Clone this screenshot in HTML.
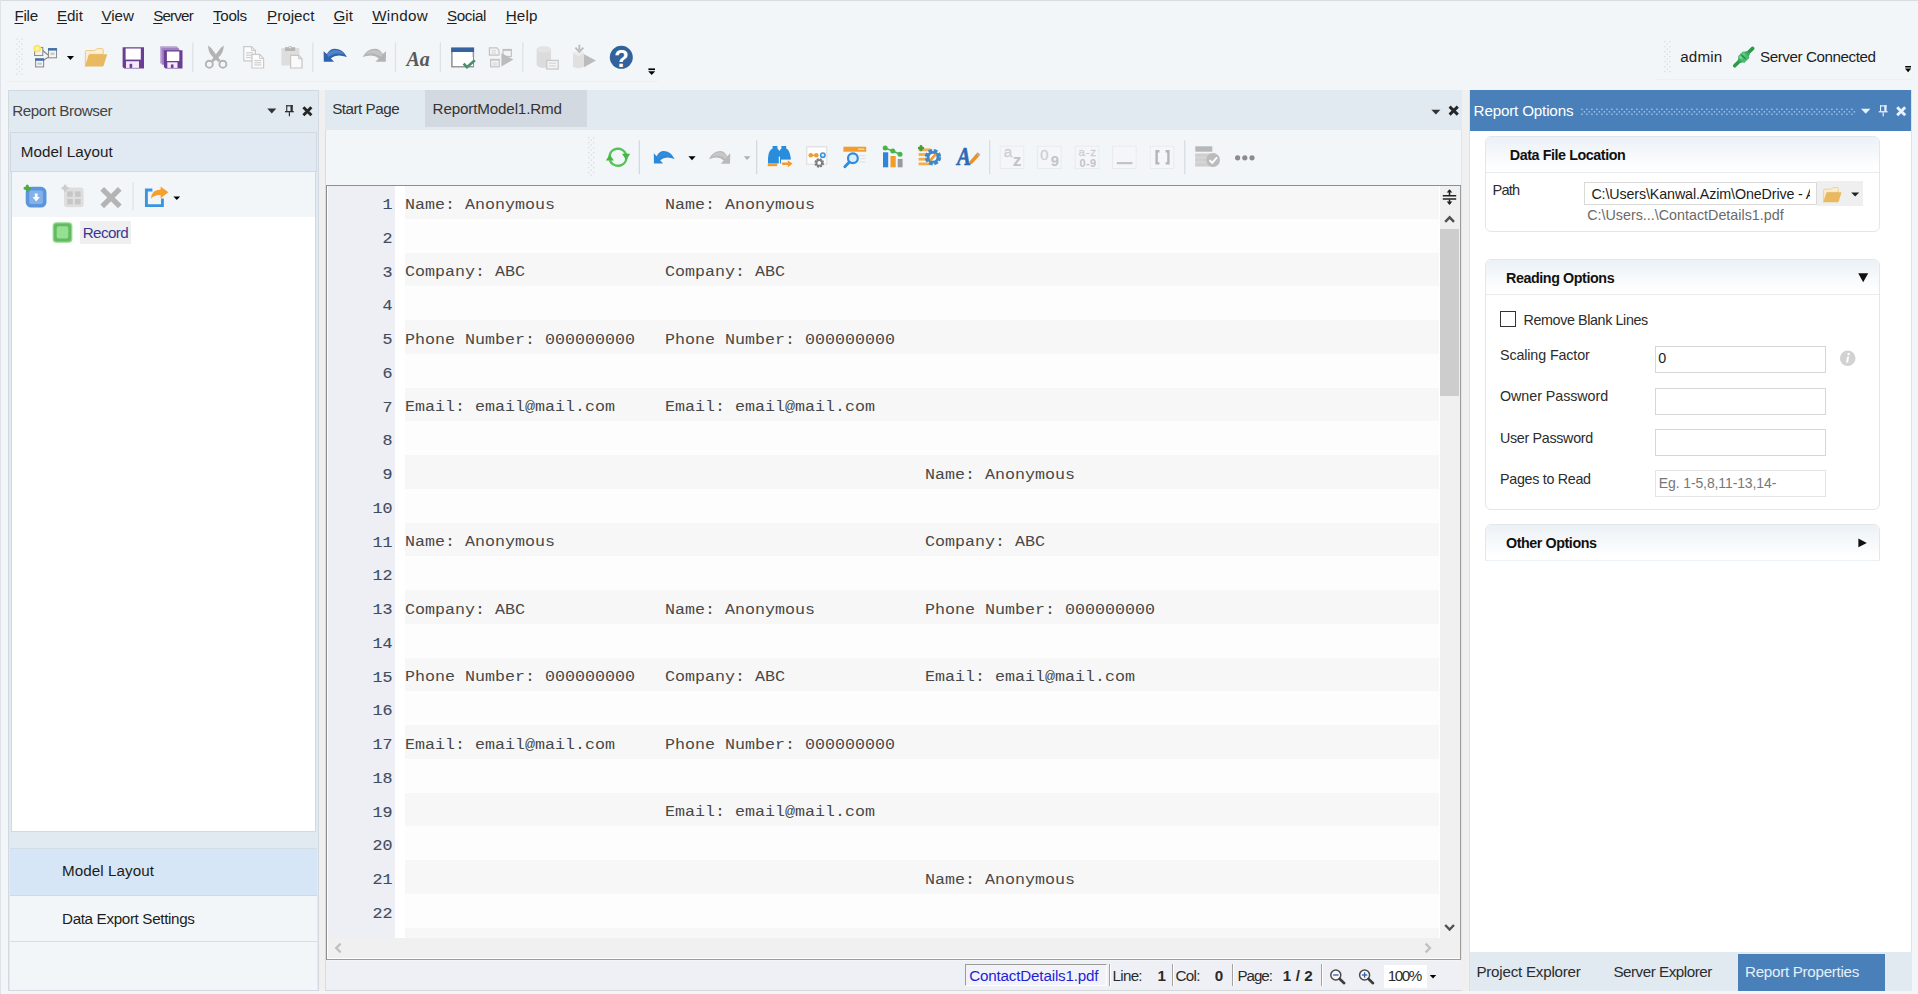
<!DOCTYPE html>
<html><head><meta charset="utf-8"><title>Report Model</title>
<style>
html,body{margin:0;padding:0;}
body{width:1918px;height:994px;overflow:hidden;position:relative;background:#f3f6f9;font-family:"Liberation Sans",sans-serif;}
.b{position:absolute;box-sizing:border-box;display:block;}
.t{position:absolute;z-index:3;white-space:pre;line-height:20px;font-family:"Liberation Sans",sans-serif;}
u{text-decoration:underline;text-underline-offset:2px;text-decoration-thickness:1px;}
</style></head><body>
<div class="b " style="left:0.00px;top:0.00px;width:1918.00px;height:994.00px;background:#f3f6f9;"></div>
<div class="b " style="left:0.00px;top:0.00px;width:1918.00px;height:1.00px;background:#d9dde2;"></div>
<div class="b " style="left:0.00px;top:0.00px;width:1.00px;height:994.00px;background:#dfe3e8;"></div>
<span class="t" style="left:14.50px;top:5.58px;font-size:15.20px;color:#1e1e1e;letter-spacing:-0.297px;"><u>F</u>ile</span>
<span class="t" style="left:56.90px;top:5.58px;font-size:15.20px;color:#1e1e1e;letter-spacing:-0.064px;"><u>E</u>dit</span>
<span class="t" style="left:101.40px;top:5.58px;font-size:15.20px;color:#1e1e1e;letter-spacing:-0.024px;"><u>V</u>iew</span>
<span class="t" style="left:153.20px;top:5.58px;font-size:15.20px;color:#1e1e1e;letter-spacing:-0.834px;"><u>S</u>erver</span>
<span class="t" style="left:213.10px;top:5.58px;font-size:15.20px;color:#1e1e1e;letter-spacing:-0.371px;"><u>T</u>ools</span>
<span class="t" style="left:267.00px;top:5.58px;font-size:15.20px;color:#1e1e1e;letter-spacing:0.015px;"><u>P</u>roject</span>
<span class="t" style="left:333.50px;top:5.58px;font-size:15.20px;color:#1e1e1e;letter-spacing:0.039px;"><u>G</u>it</span>
<span class="t" style="left:372.20px;top:5.58px;font-size:15.20px;color:#1e1e1e;letter-spacing:0.308px;"><u>W</u>indow</span>
<span class="t" style="left:447.00px;top:5.58px;font-size:15.20px;color:#1e1e1e;letter-spacing:-0.400px;"><u>S</u>ocial</span>
<span class="t" style="left:505.70px;top:5.58px;font-size:15.20px;color:#1e1e1e;letter-spacing:0.146px;"><u>H</u>elp</span>
<div class="b " style="left:6.00px;top:80.50px;width:652.00px;height:1.00px;background:#eceff3;"></div>
<span class="t" style="left:406.40px;top:49.00px;font-size:20.00px;color:#585858;font-family:'Liberation Serif', serif;font-weight:bold;font-style:italic;letter-spacing:0.060px;">Aa</span>
<span class="t" style="left:614.20px;top:48.60px;font-size:23.80px;color:#fff;font-weight:bold;">?</span>
<div class="b " style="left:1655.00px;top:79.00px;width:258.00px;height:1.00px;background:#eceff3;"></div>
<span class="t" style="left:1680.20px;top:46.58px;font-size:15.20px;color:#1e1e1e;letter-spacing:0.150px;">admin</span>
<span class="t" style="left:1760.00px;top:46.58px;font-size:15.20px;color:#1e1e1e;letter-spacing:-0.434px;">Server Connected</span>
<div class="b " style="left:8.00px;top:90.00px;width:311.00px;height:900.60px;background:#e1e9f1;border:1.5px solid #d3d9e0;"></div>
<span class="t" style="left:12.20px;top:100.68px;font-size:15.20px;color:#444;letter-spacing:-0.392px;">Report Browser</span>
<div class="b " style="left:9.50px;top:132.40px;width:307.50px;height:39.60px;background:#e1e9f2;border:1px solid #d3d9e0;"></div>
<span class="t" style="left:20.80px;top:142.13px;font-size:15.20px;color:#1c1c1c;letter-spacing:0.067px;">Model Layout</span>
<div class="b " style="left:10.50px;top:172.00px;width:305.50px;height:45.20px;background:#f3f6f9;"></div>
<div class="b " style="left:10.50px;top:217.20px;width:305.50px;height:615.30px;background:#fff;border-bottom:1px solid #d3d9e0;border-left:1px solid #d3d9e0;border-right:1px solid #d3d9e0;"></div>
<div class="b " style="left:10.50px;top:172.00px;width:1.00px;height:45.20px;background:#d3d9e0;"></div>
<div class="b " style="left:315.00px;top:172.00px;width:1.00px;height:45.20px;background:#d3d9e0;"></div>
<div class="b " style="left:80.00px;top:221.20px;width:51.00px;height:22.40px;background:#efefef;"></div>
<span class="t" style="left:82.70px;top:222.68px;font-size:15.20px;color:#3b3894;letter-spacing:-0.600px;">Record</span>
<div class="b " style="left:9.50px;top:847.50px;width:307.00px;height:47.50px;background:#d6e6f6;border-top:1px solid #d3dde7;"></div>
<div class="b " style="left:9.50px;top:895.00px;width:307.00px;height:47.00px;background:#f3f6f9;border-top:1px solid #d0d9e2;border-bottom:1px solid #d6dde5;"></div>
<div class="b " style="left:9.50px;top:942.00px;width:307.00px;height:47.50px;background:#f3f6f9;"></div>
<span class="t" style="left:62.00px;top:861.38px;font-size:15.20px;color:#1c1c1c;letter-spacing:0.067px;">Model Layout</span>
<span class="t" style="left:62.00px;top:908.88px;font-size:15.20px;color:#1c1c1c;letter-spacing:-0.337px;">Data Export Settings</span>
<div class="b " style="left:319.00px;top:90.00px;width:6.00px;height:901.00px;background:#f0f0f0;"></div>
<div class="b " style="left:1462.00px;top:90.00px;width:8.00px;height:901.00px;background:#f0f0f0;"></div>
<div class="b " style="left:325.00px;top:90.00px;width:1137.00px;height:39.50px;background:#e1e9f1;"></div>
<div class="b " style="left:425.00px;top:90.00px;width:162.30px;height:37.00px;background:#d3d9e0;"></div>
<span class="t" style="left:332.20px;top:99.48px;font-size:15.20px;color:#333;letter-spacing:-0.480px;">Start Page</span>
<span class="t" style="left:432.60px;top:99.48px;font-size:15.20px;color:#333;letter-spacing:-0.153px;">ReportModel1.Rmd</span>
<div class="b " style="left:325.00px;top:129.50px;width:1137.00px;height:861.00px;background:#f3f6f9;border-left:1px solid #d9dcdf;border-bottom:1px solid #d4d8dc;border-right:1px solid #e2e5e8;"></div>
<div class="b " style="left:326.30px;top:184.90px;width:1135.00px;height:775.00px;background:#fff;border:1.6px solid #8e8e8e;border-right-color:#9c9c9c;border-bottom-color:#9c9c9c;"></div>
<div class="b " style="left:327.80px;top:186.40px;width:67.20px;height:751.60px;background:#eeeff4;"></div>
<div class="b " style="left:405.00px;top:186.00px;width:1033.80px;height:32.75px;background:#f7f7f7;"></div>
<span class="t" style="left:382.60px;top:195.10px;font-size:16.67px;color:#3f4c5e;font-family:'Liberation Mono', monospace;transform:scaleY(0.86);transform-origin:0 14.4px;-webkit-text-stroke:0.15px #3f4c5e;">1</span>
<span class="t" style="left:405.00px;top:194.90px;font-size:16.67px;color:#484848;font-family:'Liberation Mono', monospace;transform:scaleY(0.88);transform-origin:0 14.4px;">Name: Anonymous</span>
<span class="t" style="left:665.00px;top:194.90px;font-size:16.67px;color:#484848;font-family:'Liberation Mono', monospace;transform:scaleY(0.88);transform-origin:0 14.4px;">Name: Anonymous</span>
<div class="b " style="left:405.00px;top:218.75px;width:1033.80px;height:33.75px;background:#fdfdfd;"></div>
<span class="t" style="left:382.60px;top:228.85px;font-size:16.67px;color:#3f4c5e;font-family:'Liberation Mono', monospace;transform:scaleY(0.86);transform-origin:0 14.4px;-webkit-text-stroke:0.15px #3f4c5e;">2</span>
<div class="b " style="left:405.00px;top:252.50px;width:1033.80px;height:33.75px;background:#f7f7f7;"></div>
<span class="t" style="left:382.60px;top:262.60px;font-size:16.67px;color:#3f4c5e;font-family:'Liberation Mono', monospace;transform:scaleY(0.86);transform-origin:0 14.4px;-webkit-text-stroke:0.15px #3f4c5e;">3</span>
<span class="t" style="left:405.00px;top:262.40px;font-size:16.67px;color:#484848;font-family:'Liberation Mono', monospace;transform:scaleY(0.88);transform-origin:0 14.4px;">Company: ABC</span>
<span class="t" style="left:665.00px;top:262.40px;font-size:16.67px;color:#484848;font-family:'Liberation Mono', monospace;transform:scaleY(0.88);transform-origin:0 14.4px;">Company: ABC</span>
<div class="b " style="left:405.00px;top:286.25px;width:1033.80px;height:33.75px;background:#fdfdfd;"></div>
<span class="t" style="left:382.60px;top:296.35px;font-size:16.67px;color:#3f4c5e;font-family:'Liberation Mono', monospace;transform:scaleY(0.86);transform-origin:0 14.4px;-webkit-text-stroke:0.15px #3f4c5e;">4</span>
<div class="b " style="left:405.00px;top:320.00px;width:1033.80px;height:33.75px;background:#f7f7f7;"></div>
<span class="t" style="left:382.60px;top:330.10px;font-size:16.67px;color:#3f4c5e;font-family:'Liberation Mono', monospace;transform:scaleY(0.86);transform-origin:0 14.4px;-webkit-text-stroke:0.15px #3f4c5e;">5</span>
<span class="t" style="left:405.00px;top:329.90px;font-size:16.67px;color:#484848;font-family:'Liberation Mono', monospace;transform:scaleY(0.88);transform-origin:0 14.4px;">Phone Number: 000000000</span>
<span class="t" style="left:665.00px;top:329.90px;font-size:16.67px;color:#484848;font-family:'Liberation Mono', monospace;transform:scaleY(0.88);transform-origin:0 14.4px;">Phone Number: 000000000</span>
<div class="b " style="left:405.00px;top:353.75px;width:1033.80px;height:33.75px;background:#fdfdfd;"></div>
<span class="t" style="left:382.60px;top:363.85px;font-size:16.67px;color:#3f4c5e;font-family:'Liberation Mono', monospace;transform:scaleY(0.86);transform-origin:0 14.4px;-webkit-text-stroke:0.15px #3f4c5e;">6</span>
<div class="b " style="left:405.00px;top:387.50px;width:1033.80px;height:33.75px;background:#f7f7f7;"></div>
<span class="t" style="left:382.60px;top:397.60px;font-size:16.67px;color:#3f4c5e;font-family:'Liberation Mono', monospace;transform:scaleY(0.86);transform-origin:0 14.4px;-webkit-text-stroke:0.15px #3f4c5e;">7</span>
<span class="t" style="left:405.00px;top:397.40px;font-size:16.67px;color:#484848;font-family:'Liberation Mono', monospace;transform:scaleY(0.88);transform-origin:0 14.4px;">Email: email@mail.com</span>
<span class="t" style="left:665.00px;top:397.40px;font-size:16.67px;color:#484848;font-family:'Liberation Mono', monospace;transform:scaleY(0.88);transform-origin:0 14.4px;">Email: email@mail.com</span>
<div class="b " style="left:405.00px;top:421.25px;width:1033.80px;height:33.75px;background:#fdfdfd;"></div>
<span class="t" style="left:382.60px;top:431.35px;font-size:16.67px;color:#3f4c5e;font-family:'Liberation Mono', monospace;transform:scaleY(0.86);transform-origin:0 14.4px;-webkit-text-stroke:0.15px #3f4c5e;">8</span>
<div class="b " style="left:405.00px;top:455.00px;width:1033.80px;height:33.75px;background:#f7f7f7;"></div>
<span class="t" style="left:382.60px;top:465.10px;font-size:16.67px;color:#3f4c5e;font-family:'Liberation Mono', monospace;transform:scaleY(0.86);transform-origin:0 14.4px;-webkit-text-stroke:0.15px #3f4c5e;">9</span>
<span class="t" style="left:925.00px;top:464.90px;font-size:16.67px;color:#484848;font-family:'Liberation Mono', monospace;transform:scaleY(0.88);transform-origin:0 14.4px;">Name: Anonymous</span>
<div class="b " style="left:405.00px;top:488.75px;width:1033.80px;height:33.75px;background:#fdfdfd;"></div>
<span class="t" style="left:372.60px;top:498.85px;font-size:16.67px;color:#3f4c5e;font-family:'Liberation Mono', monospace;transform:scaleY(0.86);transform-origin:0 14.4px;-webkit-text-stroke:0.15px #3f4c5e;">10</span>
<div class="b " style="left:405.00px;top:522.50px;width:1033.80px;height:33.75px;background:#f7f7f7;"></div>
<span class="t" style="left:372.60px;top:532.60px;font-size:16.67px;color:#3f4c5e;font-family:'Liberation Mono', monospace;transform:scaleY(0.86);transform-origin:0 14.4px;-webkit-text-stroke:0.15px #3f4c5e;">11</span>
<span class="t" style="left:405.00px;top:532.40px;font-size:16.67px;color:#484848;font-family:'Liberation Mono', monospace;transform:scaleY(0.88);transform-origin:0 14.4px;">Name: Anonymous</span>
<span class="t" style="left:925.00px;top:532.40px;font-size:16.67px;color:#484848;font-family:'Liberation Mono', monospace;transform:scaleY(0.88);transform-origin:0 14.4px;">Company: ABC</span>
<div class="b " style="left:405.00px;top:556.25px;width:1033.80px;height:33.75px;background:#fdfdfd;"></div>
<span class="t" style="left:372.60px;top:566.35px;font-size:16.67px;color:#3f4c5e;font-family:'Liberation Mono', monospace;transform:scaleY(0.86);transform-origin:0 14.4px;-webkit-text-stroke:0.15px #3f4c5e;">12</span>
<div class="b " style="left:405.00px;top:590.00px;width:1033.80px;height:33.75px;background:#f7f7f7;"></div>
<span class="t" style="left:372.60px;top:600.10px;font-size:16.67px;color:#3f4c5e;font-family:'Liberation Mono', monospace;transform:scaleY(0.86);transform-origin:0 14.4px;-webkit-text-stroke:0.15px #3f4c5e;">13</span>
<span class="t" style="left:405.00px;top:599.90px;font-size:16.67px;color:#484848;font-family:'Liberation Mono', monospace;transform:scaleY(0.88);transform-origin:0 14.4px;">Company: ABC</span>
<span class="t" style="left:665.00px;top:599.90px;font-size:16.67px;color:#484848;font-family:'Liberation Mono', monospace;transform:scaleY(0.88);transform-origin:0 14.4px;">Name: Anonymous</span>
<span class="t" style="left:925.00px;top:599.90px;font-size:16.67px;color:#484848;font-family:'Liberation Mono', monospace;transform:scaleY(0.88);transform-origin:0 14.4px;">Phone Number: 000000000</span>
<div class="b " style="left:405.00px;top:623.75px;width:1033.80px;height:33.75px;background:#fdfdfd;"></div>
<span class="t" style="left:372.60px;top:633.85px;font-size:16.67px;color:#3f4c5e;font-family:'Liberation Mono', monospace;transform:scaleY(0.86);transform-origin:0 14.4px;-webkit-text-stroke:0.15px #3f4c5e;">14</span>
<div class="b " style="left:405.00px;top:657.50px;width:1033.80px;height:33.75px;background:#f7f7f7;"></div>
<span class="t" style="left:372.60px;top:667.60px;font-size:16.67px;color:#3f4c5e;font-family:'Liberation Mono', monospace;transform:scaleY(0.86);transform-origin:0 14.4px;-webkit-text-stroke:0.15px #3f4c5e;">15</span>
<span class="t" style="left:405.00px;top:667.40px;font-size:16.67px;color:#484848;font-family:'Liberation Mono', monospace;transform:scaleY(0.88);transform-origin:0 14.4px;">Phone Number: 000000000</span>
<span class="t" style="left:665.00px;top:667.40px;font-size:16.67px;color:#484848;font-family:'Liberation Mono', monospace;transform:scaleY(0.88);transform-origin:0 14.4px;">Company: ABC</span>
<span class="t" style="left:925.00px;top:667.40px;font-size:16.67px;color:#484848;font-family:'Liberation Mono', monospace;transform:scaleY(0.88);transform-origin:0 14.4px;">Email: email@mail.com</span>
<div class="b " style="left:405.00px;top:691.25px;width:1033.80px;height:33.75px;background:#fdfdfd;"></div>
<span class="t" style="left:372.60px;top:701.35px;font-size:16.67px;color:#3f4c5e;font-family:'Liberation Mono', monospace;transform:scaleY(0.86);transform-origin:0 14.4px;-webkit-text-stroke:0.15px #3f4c5e;">16</span>
<div class="b " style="left:405.00px;top:725.00px;width:1033.80px;height:33.75px;background:#f7f7f7;"></div>
<span class="t" style="left:372.60px;top:735.10px;font-size:16.67px;color:#3f4c5e;font-family:'Liberation Mono', monospace;transform:scaleY(0.86);transform-origin:0 14.4px;-webkit-text-stroke:0.15px #3f4c5e;">17</span>
<span class="t" style="left:405.00px;top:734.90px;font-size:16.67px;color:#484848;font-family:'Liberation Mono', monospace;transform:scaleY(0.88);transform-origin:0 14.4px;">Email: email@mail.com</span>
<span class="t" style="left:665.00px;top:734.90px;font-size:16.67px;color:#484848;font-family:'Liberation Mono', monospace;transform:scaleY(0.88);transform-origin:0 14.4px;">Phone Number: 000000000</span>
<div class="b " style="left:405.00px;top:758.75px;width:1033.80px;height:33.75px;background:#fdfdfd;"></div>
<span class="t" style="left:372.60px;top:768.85px;font-size:16.67px;color:#3f4c5e;font-family:'Liberation Mono', monospace;transform:scaleY(0.86);transform-origin:0 14.4px;-webkit-text-stroke:0.15px #3f4c5e;">18</span>
<div class="b " style="left:405.00px;top:792.50px;width:1033.80px;height:33.75px;background:#f7f7f7;"></div>
<span class="t" style="left:372.60px;top:802.60px;font-size:16.67px;color:#3f4c5e;font-family:'Liberation Mono', monospace;transform:scaleY(0.86);transform-origin:0 14.4px;-webkit-text-stroke:0.15px #3f4c5e;">19</span>
<span class="t" style="left:665.00px;top:802.40px;font-size:16.67px;color:#484848;font-family:'Liberation Mono', monospace;transform:scaleY(0.88);transform-origin:0 14.4px;">Email: email@mail.com</span>
<div class="b " style="left:405.00px;top:826.25px;width:1033.80px;height:33.75px;background:#fdfdfd;"></div>
<span class="t" style="left:372.60px;top:836.35px;font-size:16.67px;color:#3f4c5e;font-family:'Liberation Mono', monospace;transform:scaleY(0.86);transform-origin:0 14.4px;-webkit-text-stroke:0.15px #3f4c5e;">20</span>
<div class="b " style="left:405.00px;top:860.00px;width:1033.80px;height:33.75px;background:#f7f7f7;"></div>
<span class="t" style="left:372.60px;top:870.10px;font-size:16.67px;color:#3f4c5e;font-family:'Liberation Mono', monospace;transform:scaleY(0.86);transform-origin:0 14.4px;-webkit-text-stroke:0.15px #3f4c5e;">21</span>
<span class="t" style="left:925.00px;top:869.90px;font-size:16.67px;color:#484848;font-family:'Liberation Mono', monospace;transform:scaleY(0.88);transform-origin:0 14.4px;">Name: Anonymous</span>
<div class="b " style="left:405.00px;top:893.75px;width:1033.80px;height:33.75px;background:#fdfdfd;"></div>
<span class="t" style="left:372.60px;top:903.85px;font-size:16.67px;color:#3f4c5e;font-family:'Liberation Mono', monospace;transform:scaleY(0.86);transform-origin:0 14.4px;-webkit-text-stroke:0.15px #3f4c5e;">22</span>
<div class="b " style="left:405.00px;top:927.50px;width:1033.80px;height:10.50px;background:#f7f7f7;"></div>
<div class="b " style="left:1440.00px;top:186.00px;width:19.80px;height:752.00px;background:#f0f0f0;"></div>
<div class="b " style="left:1440.30px;top:228.80px;width:18.50px;height:167.00px;background:#cdcdcd;"></div>
<div class="b " style="left:328.00px;top:938.00px;width:1131.80px;height:20.40px;background:#f0f0f0;"></div>
<div class="b " style="left:326.00px;top:961.00px;width:1135.50px;height:29.00px;background:#eef0f5;"></div>
<div class="b " style="left:965.00px;top:964.00px;width:141.50px;height:21.50px;background:#f1f3f8;border-left:1px solid #9c9c9c;border-top:1px solid #9c9c9c;border-right:1px solid #fff;border-bottom:1px solid #fff;"></div>
<span class="t" style="left:969.20px;top:965.98px;font-size:15.20px;color:#1f1fd6;letter-spacing:-0.175px;">ContactDetails1.pdf</span>
<div class="b " style="left:1108.60px;top:964.00px;width:1.00px;height:22.00px;background:#a3a3a3;"></div>
<div class="b " style="left:1109.60px;top:964.00px;width:1.00px;height:22.00px;background:#fff;"></div>
<div class="b " style="left:1171.50px;top:964.00px;width:1.00px;height:22.00px;background:#a3a3a3;"></div>
<div class="b " style="left:1172.50px;top:964.00px;width:1.00px;height:22.00px;background:#fff;"></div>
<div class="b " style="left:1231.80px;top:964.00px;width:1.00px;height:22.00px;background:#a3a3a3;"></div>
<div class="b " style="left:1232.80px;top:964.00px;width:1.00px;height:22.00px;background:#fff;"></div>
<div class="b " style="left:1321.40px;top:964.00px;width:1.00px;height:22.00px;background:#a3a3a3;"></div>
<div class="b " style="left:1322.40px;top:964.00px;width:1.00px;height:22.00px;background:#fff;"></div>
<span class="t" style="left:1112.60px;top:965.98px;font-size:15.20px;color:#2a2a2a;letter-spacing:-0.740px;">Line:</span>
<span class="t" style="left:1157.40px;top:965.98px;font-size:15.20px;color:#2a2a2a;font-weight:bold;">1</span>
<span class="t" style="left:1175.40px;top:965.98px;font-size:15.20px;color:#2a2a2a;letter-spacing:-0.677px;">Col:</span>
<span class="t" style="left:1214.80px;top:965.98px;font-size:15.20px;color:#2a2a2a;font-weight:bold;">0</span>
<span class="t" style="left:1237.40px;top:965.98px;font-size:15.20px;color:#2a2a2a;letter-spacing:-1.031px;">Page:</span>
<span class="t" style="left:1282.80px;top:965.98px;font-size:15.20px;color:#2a2a2a;font-weight:bold;letter-spacing:0.106px;">1 / 2</span>
<div class="b " style="left:1384.30px;top:965.00px;width:42.40px;height:22.60px;background:#fff;"></div>
<span class="t" style="left:1387.80px;top:965.98px;font-size:15.20px;color:#2a2a2a;letter-spacing:-1.492px;">100%</span>
<span class="t" style="left:957.20px;top:146.38px;font-size:25.40px;color:#2f68b4;font-family:'Liberation Serif', serif;font-weight:bold;font-style:italic;transform:scaleX(0.82);transform-origin:0 0;-webkit-text-stroke:0.6px #2f68b4;">A</span>
<span class="t" style="left:1003.80px;top:141.58px;font-size:15.20px;color:#cccfd2;-webkit-text-stroke:0.35px #cccfd2;">a</span>
<span class="t" style="left:1012.80px;top:149.82px;font-size:17.40px;color:#c1c3c6;font-weight:bold;">z</span>
<span class="t" style="left:1040.20px;top:145.09px;font-size:14.60px;color:#cccfd2;-webkit-text-stroke:0.35px #cccfd2;">0</span>
<span class="t" style="left:1050.80px;top:150.72px;font-size:14.80px;color:#c1c3c6;font-weight:bold;">9</span>
<span class="t" style="left:1078.60px;top:141.53px;font-size:11.60px;color:#cccfd2;letter-spacing:0.643px;-webkit-text-stroke:0.3px #cccfd2;">a-z</span>
<span class="t" style="left:1079.60px;top:152.67px;font-size:10.90px;color:#c1c3c6;font-weight:bold;letter-spacing:0.323px;">0-9</span>
<div class="b " style="left:1469.20px;top:90.40px;width:442.60px;height:900.60px;background:#fff;border-right:1px solid #dfe3e8;border-left:1px solid #dde1e6;"></div>
<div class="b " style="left:1469.50px;top:90.40px;width:441.40px;height:41.10px;background:#4a80b9;"></div>
<span class="t" style="left:1473.60px;top:100.88px;font-size:15.20px;color:#fff;letter-spacing:-0.171px;">Report Options</span>
<div class="b " style="left:1484.80px;top:136.00px;width:395.20px;height:96.00px;background:#fff;border:1px solid #e3e7ec;border-radius:6px;"></div>
<div class="b " style="left:1485.80px;top:137.00px;width:393.20px;height:35.80px;background:linear-gradient(#ecf1f6,#ffffff 92%);border-bottom:1px solid #e9ecef;border-radius:5px 5px 0 0;"></div>
<span class="t" style="left:1509.80px;top:144.90px;font-size:14.30px;color:#111;font-weight:bold;letter-spacing:-0.421px;">Data File Location</span>
<span class="t" style="left:1492.60px;top:180.19px;font-size:14.60px;color:#2c2c2c;letter-spacing:-0.811px;">Path</span>
<div class="b " style="left:1584.00px;top:181.70px;width:233.00px;height:23.50px;background:#fff;border:1px solid #d9d9d9;"></div>
<div class="b " style="left:1817.40px;top:181.20px;width:45.20px;height:24.60px;background:#efefef;"></div>
<div class="b " style="left:1585.00px;top:183.00px;width:225.00px;height:21.00px;overflow:hidden;"><span class="t" style="left:6.40px;top:1.00px;font-size:14.30px;color:#1c1c1c;letter-spacing:-0.127px;">C:\Users\Kanwal.Azim\OneDrive - A</span></div>
<span class="t" style="left:1587.20px;top:204.80px;font-size:14.30px;color:#6a6a6a;letter-spacing:0.007px;">C:\Users...\ContactDetails1.pdf</span>
<div class="b " style="left:1484.80px;top:258.80px;width:395.20px;height:251.00px;background:#fff;border:1px solid #e3e7ec;border-radius:6px;"></div>
<div class="b " style="left:1485.80px;top:259.80px;width:393.20px;height:35.30px;background:linear-gradient(#ecf1f6,#ffffff 92%);border-bottom:1px solid #e9ecef;border-radius:5px 5px 0 0;"></div>
<span class="t" style="left:1506.00px;top:267.70px;font-size:14.30px;color:#111;font-weight:bold;letter-spacing:-0.414px;">Reading Options</span>
<div class="b " style="left:1500.00px;top:311.40px;width:16.00px;height:16.00px;background:#fff;border:1.3px solid #333;"></div>
<span class="t" style="left:1523.60px;top:309.90px;font-size:14.30px;color:#2c2c2c;letter-spacing:-0.385px;">Remove Blank Lines</span>
<span class="t" style="left:1500.00px;top:344.70px;font-size:14.30px;color:#2c2c2c;letter-spacing:-0.123px;">Scaling Factor</span>
<div class="b " style="left:1655.20px;top:346.20px;width:171.00px;height:27.00px;background:#fff;border:1px solid #d6d6d6;"></div>
<span class="t" style="left:1500.00px;top:386.20px;font-size:14.30px;color:#2c2c2c;letter-spacing:-0.052px;">Owner Password</span>
<div class="b " style="left:1655.20px;top:387.70px;width:171.00px;height:27.00px;background:#fff;border:1px solid #d6d6d6;"></div>
<span class="t" style="left:1500.00px;top:427.70px;font-size:14.30px;color:#2c2c2c;letter-spacing:-0.313px;">User Password</span>
<div class="b " style="left:1655.20px;top:429.20px;width:171.00px;height:27.00px;background:#fff;border:1px solid #d6d6d6;"></div>
<span class="t" style="left:1500.00px;top:468.60px;font-size:14.30px;color:#2c2c2c;letter-spacing:-0.300px;">Pages to Read</span>
<div class="b " style="left:1655.20px;top:470.20px;width:171.00px;height:27.00px;background:#fff;border:1px solid #e4e4e4;"></div>
<span class="t" style="left:1658.20px;top:348.00px;font-size:14.30px;color:#1c1c1c;">0</span>
<span class="t" style="left:1658.80px;top:472.90px;font-size:14.00px;color:#777;letter-spacing:-0.116px;">Eg. 1-5,8,11-13,14-</span>
<div class="b " style="left:1484.80px;top:523.80px;width:395.20px;height:37.20px;background:#fff;border:1px solid #e3e7ec;border-radius:6px 6px 0 0;"></div>
<div class="b " style="left:1485.80px;top:524.80px;width:393.20px;height:36.20px;background:linear-gradient(#ecf1f6,#ffffff 92%);border-bottom:1px solid transparent;border-radius:5px 5px 0 0;"></div>
<span class="t" style="left:1506.00px;top:532.70px;font-size:14.30px;color:#111;font-weight:bold;letter-spacing:-0.427px;">Other Options</span>
<div class="b " style="left:1469.50px;top:951.50px;width:442.50px;height:39.50px;background:#e1e9f1;"></div>
<div class="b " style="left:1737.60px;top:954.30px;width:147.60px;height:37.00px;background:#4a80b9;"></div>
<span class="t" style="left:1476.40px;top:962.38px;font-size:15.20px;color:#2c2c2c;letter-spacing:-0.242px;">Project Explorer</span>
<span class="t" style="left:1613.40px;top:962.38px;font-size:15.20px;color:#2c2c2c;letter-spacing:-0.471px;">Server Explorer</span>
<span class="t" style="left:1745.00px;top:962.38px;font-size:15.20px;color:#e6eef7;letter-spacing:-0.295px;">Report Properties</span>
<svg class="b" style="left:0;top:0" width="1918" height="994" viewBox="0 0 1918 994"><g fill="#d5dce4"><rect x="16.3" y="38.5" width="1.3" height="1.3"/><rect x="21.3" y="38.5" width="1.3" height="1.3"/><rect x="18.8" y="41.0" width="1.3" height="1.3"/><rect x="16.3" y="43.5" width="1.3" height="1.3"/><rect x="21.3" y="43.5" width="1.3" height="1.3"/><rect x="18.8" y="46.0" width="1.3" height="1.3"/><rect x="16.3" y="48.5" width="1.3" height="1.3"/><rect x="21.3" y="48.5" width="1.3" height="1.3"/><rect x="18.8" y="51.0" width="1.3" height="1.3"/><rect x="16.3" y="53.5" width="1.3" height="1.3"/><rect x="21.3" y="53.5" width="1.3" height="1.3"/><rect x="18.8" y="56.0" width="1.3" height="1.3"/><rect x="16.3" y="58.5" width="1.3" height="1.3"/><rect x="21.3" y="58.5" width="1.3" height="1.3"/><rect x="18.8" y="61.0" width="1.3" height="1.3"/><rect x="16.3" y="63.5" width="1.3" height="1.3"/><rect x="21.3" y="63.5" width="1.3" height="1.3"/><rect x="18.8" y="66.0" width="1.3" height="1.3"/><rect x="16.3" y="68.5" width="1.3" height="1.3"/><rect x="21.3" y="68.5" width="1.3" height="1.3"/><rect x="18.8" y="71.0" width="1.3" height="1.3"/><rect x="16.3" y="73.5" width="1.3" height="1.3"/><rect x="21.3" y="73.5" width="1.3" height="1.3"/></g>
<g>
<path d="M41 49 L48 55 M44 60 L48.5 57" stroke="#8c8c8c" stroke-width="1.3" fill="none"/>
<rect x="34.6" y="47.5" width="8.2" height="8" fill="#f4f4f4" stroke="#8e8e8e" stroke-width="1.1"/>
<circle cx="37.2" cy="48.6" r="3.9" fill="#f7e66a"/><circle cx="37.2" cy="48.6" r="2" fill="#fdf3a0"/>
<rect x="48.5" y="48.6" width="8" height="9.2" fill="#f6f6f6" stroke="#8e8e8e" stroke-width="1.1"/>
<rect x="48" y="48.2" width="9" height="2.4" fill="#3f6fae"/>
<rect x="50.5" y="52.5" width="4" height="2.6" fill="#c9c9c9"/>
<rect x="35.6" y="58.9" width="8" height="8" fill="#f6f6f6" stroke="#8e8e8e" stroke-width="1.1"/>
<rect x="35.1" y="58.4" width="9" height="2.4" fill="#3f6fae"/>
<rect x="37.3" y="62.6" width="4.6" height="2.2" fill="#c9c9c9"/>
</g>
<path d="M66.90 56.00 L74.00 56.00 L70.45 60.00 Z" fill="#000"/>
<g transform="translate(84.60 48.40) scale(1.000)">
<path d="M0.8 18 L0.8 3.2 Q0.8 2.2 1.8 2.2 L10 2.2 L12 0.6 Q12.4 0.2 13 0.2 L17.6 0.2 Q18.6 0.2 18.6 1.2 L18.6 6 L4.8 6 Z" fill="#fbeed2" stroke="#ecc47a" stroke-width="0.9"/>
<path d="M0.6 18.2 L4.2 6.6 Q4.5 5.8 5.3 5.8 L21.8 5.8 Q22.7 5.8 22.4 6.7 L19 17.4 Q18.7 18.2 17.9 18.2 Z" fill="#e8b961"/>
</g>
<g>
<path d="M122.60 47.20 h21.40 v21.30 h-19.80 l-1.6 -1.6 Z" fill="#6a3e92"/>
<rect x="125.60" y="48.50" width="15.20" height="11.08" fill="#fff"/>
<rect x="126.00" y="61.26" width="13.00" height="6.64" fill="#f4e9fb"/>
<rect x="129.60" y="63.81" width="2.6" height="4.09" fill="#6a3e92"/>
</g>
<path d="M160.2 46.2 h16.5 l2.3 2.3 v15 h-18.8 Z" fill="#b9a0d4"/><path d="M161.8 48 h16 l1.5 1.5 v15.2 h-17.5 Z" fill="#9f80c0"/>
<g>
<path d="M163.90 50.20 h18.60 v18.30 h-17.00 l-1.6 -1.6 Z" fill="#6a3e92"/>
<rect x="166.90" y="51.50" width="12.40" height="9.52" fill="#fff"/>
<rect x="167.30" y="62.28" width="10.20" height="5.62" fill="#f4e9fb"/>
<rect x="170.90" y="64.47" width="2.6" height="3.43" fill="#6a3e92"/>
</g>
<rect x="192.20" y="42.30" width="1.3" height="29.70" fill="#dde2e8"/>
<rect x="312.20" y="42.30" width="1.3" height="29.70" fill="#dde2e8"/>
<rect x="394.80" y="42.30" width="1.3" height="29.70" fill="#dde2e8"/>
<rect x="439.70" y="42.30" width="1.3" height="29.70" fill="#dde2e8"/>
<rect x="522.20" y="42.30" width="1.3" height="29.70" fill="#dde2e8"/>
<g fill="#b3b3b3">
<path d="M208 45.4 Q211.4 47.4 213.4 51 L220.6 60.4 L218.2 62 L211.4 55.6 Q208.2 51.4 208 45.4 Z"/>
<path d="M223.8 45.4 Q220.4 47.4 218.4 51 L211.2 60.4 L213.6 62 L220.4 55.6 Q223.6 51.4 223.8 45.4 Z"/></g>
<g fill="none" stroke="#b3b3b3" stroke-width="1.9"><circle cx="209.3" cy="64.2" r="3.5"/><circle cx="222.9" cy="64.2" r="3.5"/></g>
<path d="M243.80 46.60 h7.60 l4.00 4.00 v10.20 h-11.60 Z" fill="#fdfdfd" stroke="#c9c9c9" stroke-width="1.2"/><path d="M251.40 46.60 v4.00 h4.00" fill="none" stroke="#c9c9c9" stroke-width="1"/><rect x="246.00" y="52.10" width="7.20" height="1.3" fill="#d2d2d2"/><rect x="246.00" y="54.50" width="7.20" height="1.3" fill="#d2d2d2"/><rect x="246.00" y="56.90" width="7.20" height="1.3" fill="#d2d2d2"/>
<path d="M252.00 54.40 h7.60 l4.00 4.00 v9.60 h-11.60 Z" fill="#fdfdfd" stroke="#c9c9c9" stroke-width="1.2"/><path d="M259.60 54.40 v4.00 h4.00" fill="none" stroke="#c9c9c9" stroke-width="1"/><rect x="254.20" y="59.90" width="7.20" height="1.3" fill="#d2d2d2"/><rect x="254.20" y="62.10" width="7.20" height="1.3" fill="#d2d2d2"/><rect x="254.20" y="64.30" width="7.20" height="1.3" fill="#d2d2d2"/>
<rect x="281.4" y="48" width="18" height="17.5" fill="#dddddd"/>
<rect x="285" y="47.2" width="10.2" height="3.8" fill="#b4b4b4"/><path d="M287.6 47.4 Q290.1 44.4 292.6 47.4 Z" fill="#b4b4b4"/><circle cx="290.1" cy="47.6" r="0.9" fill="#eee"/>
<path d="M290.60 55.40 h8.00 l3.40 3.40 v9.20 h-11.40 Z" fill="#fafafa" stroke="#c6c6c6" stroke-width="1.2"/><path d="M298.60 55.40 v3.40 h3.40" fill="none" stroke="#c6c6c6" stroke-width="1"/>
<g transform="translate(323.40 48.60) scale(1.000 0.986)"><path d="M0.2 2.6 L0.4 13.4 L10.6 13.4 L7.4 9.9 Q13.2 4.6 23.6 8.6 Q19.2 0.2 11.2 0.2 Q6.6 0.2 3.4 5.6 Z" fill="#2d62ae"/>
<path d="M3.4 5.6 Q7 1.6 11.6 1.5 Q17 1.4 21 6 Q14 3.6 8.6 6.4 Q5.8 7.8 4.8 8.6 Z" fill="#6f9fd8" opacity="0.55"/></g>
<g transform="translate(386.20 48.60) scale(-1.000 0.986)"><path d="M0.2 2.6 L0.4 13.4 L10.6 13.4 L7.4 9.9 Q13.2 4.6 23.6 8.6 Q19.2 0.2 11.2 0.2 Q6.6 0.2 3.4 5.6 Z" fill="#b3b3b3"/>
<path d="M3.4 5.6 Q7 1.6 11.6 1.5 Q17 1.4 21 6 Q14 3.6 8.6 6.4 Q5.8 7.8 4.8 8.6 Z" fill="#d2d2d2" opacity="0.55"/></g>
<rect x="451.9" y="48.5" width="21.4" height="18.2" fill="#fff" stroke="#8f8f8f" stroke-width="1.5"/>
<rect x="451.2" y="47.5" width="22.9" height="4.6" fill="#35639f"/>
<rect x="453" y="52.1" width="20" height="14" fill="#fff"/><rect x="472.6" y="52" width="1.5" height="5" fill="#9a9a9a"/>
<path d="M463.6 63.6 L467 67.2 L474.8 60.2" fill="none" stroke="#4b8e70" stroke-width="2.7"/>
<g fill="#f3f3f3" stroke="#c4c4c4" stroke-width="1.2">
<path d="M489.4 47.8 h7.4 l2.2 2.4 v5 h-9.6 Z"/><rect x="503" y="49.5" width="8.4" height="7"/><rect x="490.6" y="59.4" width="8.6" height="7.4"/></g>
<rect x="503" y="49" width="8.4" height="1.8" fill="#bdbdbd"/><rect x="490.6" y="59" width="8.6" height="1.6" fill="#c6c6c6"/>
<rect x="491.5" y="50.3" width="4.5" height="1" fill="#d4d4d4"/><rect x="491.5" y="52.6" width="4.5" height="1" fill="#d4d4d4"/><rect x="492.6" y="62.6" width="4.6" height="1" fill="#d4d4d4"/><rect x="492.6" y="64.4" width="4.6" height="1" fill="#d4d4d4"/>
<path d="M501.4 53 L513.4 59.6 L501.4 66.4 Z" fill="#bcbcbc"/>
<path d="M536.6 49.5 v15 a7.2 3.4 0 0 0 14.4 0 v-15 Z" fill="#dcdcdc"/><ellipse cx="543.8" cy="49.4" rx="7.2" ry="3.4" fill="#e3e3e3"/>
<rect x="546.8" y="60.4" width="11.4" height="8.6" fill="#f4f4f4" stroke="#c8c8c8" stroke-width="1.3"/>
<rect x="549" y="62.6" width="7" height="1.1" fill="#d2d2d2"/><rect x="549" y="65.4" width="7" height="1.1" fill="#d2d2d2"/>
<path d="M573 52.5 l5.5 3.6 l5.5 -3.6 v14.6 q-5.5 2.2 -11 0 Z" fill="#e0e0e0"/><path d="M573 52.5 l5.5 -1.2 l5.5 1.2 l-5.5 3.6Z" fill="#ececec"/>
<path d="M579.4 44.8 v5.2 M575.4 47.6 l4 4.2 l4 -4.2" fill="none" stroke="#bdbdbd" stroke-width="1.9"/>
<path d="M584 54.2 L596 60.6 L584 67.2 Z" fill="#bcbcbc"/>
<circle cx="621.3" cy="57.3" r="11.5" fill="#31629c"/>
<rect x="648.4" y="68.4" width="6.6" height="1.7" fill="#000"/><path d="M648.20 71.30 L655.20 71.30 L651.70 75.00 Z" fill="#000"/>
<g fill="#d5dce4"><rect x="1664.2" y="41.0" width="1.3" height="1.3"/><rect x="1669.2" y="41.0" width="1.3" height="1.3"/><rect x="1666.7" y="43.5" width="1.3" height="1.3"/><rect x="1664.2" y="46.0" width="1.3" height="1.3"/><rect x="1669.2" y="46.0" width="1.3" height="1.3"/><rect x="1666.7" y="48.5" width="1.3" height="1.3"/><rect x="1664.2" y="51.0" width="1.3" height="1.3"/><rect x="1669.2" y="51.0" width="1.3" height="1.3"/><rect x="1666.7" y="53.5" width="1.3" height="1.3"/><rect x="1664.2" y="56.0" width="1.3" height="1.3"/><rect x="1669.2" y="56.0" width="1.3" height="1.3"/><rect x="1666.7" y="58.5" width="1.3" height="1.3"/><rect x="1664.2" y="61.0" width="1.3" height="1.3"/><rect x="1669.2" y="61.0" width="1.3" height="1.3"/><rect x="1666.7" y="63.5" width="1.3" height="1.3"/><rect x="1664.2" y="66.0" width="1.3" height="1.3"/><rect x="1669.2" y="66.0" width="1.3" height="1.3"/><rect x="1666.7" y="68.5" width="1.3" height="1.3"/><rect x="1664.2" y="71.0" width="1.3" height="1.3"/><rect x="1669.2" y="71.0" width="1.3" height="1.3"/></g>
<g transform="translate(1743.7 57.1) rotate(-44)">
<rect x="-14.3" y="-1.8" width="28.6" height="3.6" rx="1.8" fill="#2b9a49"/>
<path d="M-6.6 -1.8 L-3.8 -3.6 L-3.8 3.6 L-6.6 1.8 Z M6.6 -1.8 L3.8 -3.6 L3.8 3.6 L6.6 1.8 Z" fill="#3aa85c"/>
<rect x="-4.3" y="-4.7" width="4.1" height="9.4" rx="1.9" fill="#4aba6e"/><rect x="0.2" y="-4.7" width="4.1" height="9.4" rx="1.9" fill="#4aba6e"/>
<rect x="-3.5" y="-3.6" width="2" height="3.8" rx="1" fill="#7ce49c" opacity="0.8"/><rect x="1.1" y="-3.6" width="1.9" height="3.4" rx="0.9" fill="#74dc94" opacity="0.7"/>
<rect x="-0.4" y="-4.8" width="0.8" height="9.6" fill="#1b7f36"/>
</g>
<rect x="1905.2" y="66" width="5.8" height="1.5" fill="#000"/><path d="M1905.00 68.60 L1911.20 68.60 L1908.10 72.30 Z" fill="#000"/>
<path d="M267.30 108.60 L276.30 108.60 L271.80 113.60 Z" fill="#333"/>
<g transform="translate(285.00 105.20)" fill="#2e2e2e"><rect x="1.2" y="0" width="6.6" height="1.2"/><rect x="1.2" y="0" width="1.1" height="6"/><rect x="5.5" y="0" width="2.3" height="6"/><rect x="0" y="5.8" width="8.8" height="1.3"/><rect x="3.8" y="7" width="1.2" height="4"/></g>
<path d="M303.40 107.20 L311.40 115.20 M311.40 107.20 L303.40 115.20" stroke="#262626" stroke-width="3.0" fill="none"/>
<rect x="27.5" y="188.6" width="17.2" height="17.2" rx="3.6" fill="#83b1ea" stroke="#5b96dd" stroke-width="3.6"/>
<path d="M34.8 193.4 h2.8 v3.6 h2.2 l-3.6 4.4 l-3.6 -4.4 h2.2 Z" fill="#fff"/>
<path d="M27.3 186 v4.6 M25 188.3 h4.6" stroke="#4ea94e" stroke-width="3" stroke-linecap="round"/>
<rect x="64" y="187.6" width="19.6" height="19.6" rx="3" fill="#dedede"/>
<g fill="#c6c6c6"><rect x="67.2" y="191.4" width="5.6" height="5.4"/><rect x="75" y="191.4" width="5.6" height="5.4"/><rect x="67.2" y="199" width="5.6" height="5.4"/><rect x="75" y="199" width="5.6" height="5.4"/></g>
<path d="M62.8 188.2 h4.6 M65.1 185.9 v4.6" stroke="#cdcdcd" stroke-width="2.8" stroke-linecap="round"/>
<path d="M102.20 188.80 L119.80 206.40 M119.80 188.80 L102.20 206.40" stroke="#b4b4b4" stroke-width="5.2" fill="none"/>
<rect x="132.5" y="182.4" width="1.2" height="28.2" fill="#dde2e8"/>
<path d="M152.4 190 h-6 v15.6 h16 v-7" fill="none" stroke="#3b94de" stroke-width="2.9"/>
<path d="M151 198.6 Q151.6 189.8 160.6 189.6 L160.6 186.4 L168.4 192.2 L160.6 198.2 L160.6 195 Q154.6 194.6 151 198.6 Z" fill="#f59f2f"/>
<path d="M173.40 196.40 L180.20 196.40 L176.80 200.10 Z" fill="#000"/>
<rect x="52.6" y="222.2" width="19.8" height="20.5" rx="3.8" fill="#8fdc8a"/><rect x="53.9" y="223.5" width="17.2" height="17.9" rx="3.2" fill="#63ba62"/><rect x="56.7" y="226.3" width="11.6" height="12.3" rx="1.8" fill="#96e091"/>
<path d="M1431.40 109.80 L1440.40 109.80 L1435.90 114.60 Z" fill="#333"/>
<path d="M1449.60 106.60 L1457.80 114.60 M1457.80 106.60 L1449.60 114.60" stroke="#262626" stroke-width="2.9" fill="none"/>
<g fill="#d5dce4"><rect x="588.0" y="137.0" width="1.3" height="1.3"/><rect x="593.0" y="137.0" width="1.3" height="1.3"/><rect x="590.5" y="139.5" width="1.3" height="1.3"/><rect x="588.0" y="142.0" width="1.3" height="1.3"/><rect x="593.0" y="142.0" width="1.3" height="1.3"/><rect x="590.5" y="144.5" width="1.3" height="1.3"/><rect x="588.0" y="147.0" width="1.3" height="1.3"/><rect x="593.0" y="147.0" width="1.3" height="1.3"/><rect x="590.5" y="149.5" width="1.3" height="1.3"/><rect x="588.0" y="152.0" width="1.3" height="1.3"/><rect x="593.0" y="152.0" width="1.3" height="1.3"/><rect x="590.5" y="154.5" width="1.3" height="1.3"/><rect x="588.0" y="157.0" width="1.3" height="1.3"/><rect x="593.0" y="157.0" width="1.3" height="1.3"/><rect x="590.5" y="159.5" width="1.3" height="1.3"/><rect x="588.0" y="162.0" width="1.3" height="1.3"/><rect x="593.0" y="162.0" width="1.3" height="1.3"/><rect x="590.5" y="164.5" width="1.3" height="1.3"/><rect x="588.0" y="167.0" width="1.3" height="1.3"/><rect x="593.0" y="167.0" width="1.3" height="1.3"/><rect x="590.5" y="169.5" width="1.3" height="1.3"/><rect x="588.0" y="172.0" width="1.3" height="1.3"/><rect x="593.0" y="172.0" width="1.3" height="1.3"/><rect x="590.5" y="174.5" width="1.3" height="1.3"/></g>
<path d="M1442.8 195.7 h13.4 M1442.8 198.9 h13.4" stroke="#222" stroke-width="1.5"/><path d="M1449.5 190 v5 M1449.5 199.4 v4.6" stroke="#222" stroke-width="1.5"/><path d="M1446.7 192.6 l2.8 -3.4 l2.8 3.4 Z M1446.7 201.6 l2.8 3.4 l2.8 -3.4 Z" fill="#222"/>
<path d="M1445.2 221.9 l4.4 -4.6 l4.4 4.6" fill="none" stroke="#505050" stroke-width="2.4"/>
<path d="M1445.2 925 l4.4 4.6 l4.4 -4.6" fill="none" stroke="#505050" stroke-width="2.4"/>
<path d="M340.6 943.6 l-4.4 4.4 l4.4 4.4" fill="none" stroke="#c0c0c0" stroke-width="2.2"/>
<path d="M1425.6 943.6 l4.4 4.4 l-4.4 4.4" fill="none" stroke="#c0c0c0" stroke-width="2.2"/>
<circle cx="1335.80" cy="975.00" r="5" fill="#f8f8f8" stroke="#4a4a4a" stroke-width="1.5"/><path d="M1339.80 979.00 L1344.20 983.20" stroke="#3c3c3c" stroke-width="2.6" stroke-linecap="round"/><path d="M1333.10 975.00 h5.4" stroke="#2a5db0" stroke-width="1.3"/>
<circle cx="1364.60" cy="975.00" r="5" fill="#f8f8f8" stroke="#4a4a4a" stroke-width="1.5"/><path d="M1368.60 979.00 L1373.00 983.20" stroke="#3c3c3c" stroke-width="2.6" stroke-linecap="round"/><path d="M1361.90 975.00 h5.4" stroke="#2a5db0" stroke-width="1.3"/><path d="M1364.60 972.30 v5.4" stroke="#2a5db0" stroke-width="1.3"/>
<path d="M1429.80 975.00 L1436.20 975.00 L1433.00 978.40 Z" fill="#000"/>
<rect x="638.70" y="140.40" width="1.3" height="33.80" fill="#d3d9e0"/>
<rect x="756.00" y="140.40" width="1.3" height="33.80" fill="#d3d9e0"/>
<rect x="989.00" y="140.40" width="1.3" height="33.80" fill="#d8dde3"/>
<rect x="1184.10" y="140.40" width="1.3" height="33.80" fill="#d8dde3"/>
<g fill="none" stroke="#58c258" stroke-width="2.5">
<path d="M609.4 156.6 A8.6 8.6 0 0 1 626 154.3"/><path d="M626.5 158 A8.6 8.6 0 0 1 609.9 160.2"/></g>
<path d="M622 153.8 L630.2 153.8 L626.2 160 Z" fill="#42b942"/><path d="M605.8 160.6 L613.9 160.6 L609.8 154.4 Z" fill="#42b942"/>
<g transform="translate(653.60 150.90) scale(0.892 0.943)"><path d="M0.2 2.6 L0.4 13.4 L10.6 13.4 L7.4 9.9 Q13.2 4.6 23.6 8.6 Q19.2 0.2 11.2 0.2 Q6.6 0.2 3.4 5.6 Z" fill="#2c88d8"/>
<path d="M3.4 5.6 Q7 1.6 11.6 1.5 Q17 1.4 21 6 Q14 3.6 8.6 6.4 Q5.8 7.8 4.8 8.6 Z" fill="#3a92de" opacity="0.55"/></g>
<path d="M688.40 156.20 L695.60 156.20 L692.00 160.20 Z" fill="#000"/>
<g transform="translate(730.40 150.80) scale(-0.908 0.971)"><path d="M0.2 2.6 L0.4 13.4 L10.6 13.4 L7.4 9.9 Q13.2 4.6 23.6 8.6 Q19.2 0.2 11.2 0.2 Q6.6 0.2 3.4 5.6 Z" fill="#b9b9b9"/>
<path d="M3.4 5.6 Q7 1.6 11.6 1.5 Q17 1.4 21 6 Q14 3.6 8.6 6.4 Q5.8 7.8 4.8 8.6 Z" fill="#d4d4d4" opacity="0.55"/></g>
<path d="M743.80 156.20 L750.40 156.20 L747.10 160.00 Z" fill="#b0b0b0"/>
<g fill="#2a8ddc">
<path d="M772.6 146 h4.8 v2.6 l1.4 1.4 v13.6 h-10.8 v-5.4 Q768.4 152 771 149.6 L772.6 148.4 Z"/>
<path d="M781.4 146 h4.8 v2.4 l1.6 1.2 Q789.8 152 790.8 158.2 v5.4 h-10.8 v-13.6 l1.4 -1.4 Z"/>
<rect x="777.6" y="150.6" width="3.6" height="6"/></g>
<rect x="767.8" y="163.4" width="9.4" height="2.8" fill="#f29c2b"/>
<rect x="781" y="159.6" width="10" height="4" fill="#f3f6f9"/>
<path d="M782.2 162.4 h5.6 v-2.2 l4.8 3.5 l-4.8 3.5 v-2.2 h-5.6 Z" fill="#f29c2b"/>
<rect x="806.8" y="146.8" width="20" height="17.4" fill="#fdfdfd" stroke="#dddddd" stroke-width="1.1"/>
<circle cx="810.8" cy="155.3" r="2.3" fill="#f29c2b"/><circle cx="816.3" cy="155.3" r="2.3" fill="#f29c2b"/><path d="M811 155.3 h6" stroke="#f29c2b" stroke-width="1.4"/>
<circle cx="822.8" cy="155.2" r="2.2" fill="#d8ebfb" stroke="#3a93e0" stroke-width="1.6"/>
<circle cx="819.2" cy="162.9" r="3.5" fill="none" stroke="#7d7d7d" stroke-width="2.6" stroke-dasharray="1.9 0.85"/><circle cx="819.2" cy="162.9" r="2.7" fill="#fff" stroke="#7d7d7d" stroke-width="1.7"/>
<rect x="843.4" y="146.7" width="22.8" height="5" fill="#f29c2b"/><rect x="858" y="148.5" width="6.4" height="1.5" fill="#fbd7a4"/>
<g stroke="#e2e2e2" stroke-width="1.3"><path d="M859 155.6 h6.4 M860.4 158.7 h5 M859 161.8 h6.4"/></g>
<circle cx="852.9" cy="158.3" r="4.9" fill="#dcedfc" stroke="#2f8bdc" stroke-width="2.2"/><path d="M849.2 162.2 L844.8 166.8" stroke="#2f8bdc" stroke-width="2.8" stroke-linecap="round"/>
<rect x="883" y="152.3" width="5.2" height="15" fill="#2f86d8"/><rect x="890.5" y="156" width="5.2" height="11.3" fill="#f29c2b"/><rect x="897.7" y="158.9" width="4.9" height="8.4" fill="#9a9a9a"/>
<path d="M885.2 148.1 L892.8 151 L900 154.3" stroke="#45b549" stroke-width="1.5" fill="none"/><circle cx="885.2" cy="148.1" r="2.5" fill="#45b549"/><circle cx="892.8" cy="151" r="2.5" fill="#45b549"/><circle cx="900" cy="154.3" r="2.5" fill="#45b549"/>
<g fill="#f4ad4e"><rect x="918.6" y="148.4" width="12" height="2.8"/><rect x="918.6" y="153.1" width="10" height="2.8"/><rect x="918.6" y="157.8" width="10" height="2.8"/><rect x="918.6" y="162.5" width="12" height="2.8"/></g>
<circle cx="933" cy="157.2" r="5.9" fill="#f3f6f9" stroke="#3f87c8" stroke-width="4.6" stroke-dasharray="3.2 1.43"/><circle cx="933" cy="157.2" r="4.9" fill="#f6f9fc" stroke="#3f87c8" stroke-width="2.8"/>
<path d="M931 159.6 L935.2 154.8" stroke="#f29c2b" stroke-width="2.6" stroke-linecap="round"/>
<path d="M921 146.3 v3.6 M919.2 148.1 h3.6" stroke="#4a9a3c" stroke-width="2.8" stroke-linecap="round"/>
<path d="M968.8 164.8 L969.8 161.2 L976.4 153.6 L979.2 156 L972.4 163.6 Z" fill="#e8922e"/><path d="M976.4 153.6 L977.6 152.3 L980.3 154.7 L979.2 156Z" fill="#a6a6a6"/>
<rect x="1000.20" y="146.2" width="23.6" height="22.4" fill="#f4f6f9" stroke="#e8ebee" stroke-width="1"/>
<rect x="1037.60" y="146.2" width="23.6" height="22.4" fill="#f4f6f9" stroke="#e8ebee" stroke-width="1"/>
<rect x="1075.20" y="146.2" width="23.6" height="22.4" fill="#f4f6f9" stroke="#e8ebee" stroke-width="1"/>
<rect x="1112.60" y="146.2" width="23.6" height="22.4" fill="#f4f6f9" stroke="#e8ebee" stroke-width="1"/>
<rect x="1150.20" y="146.2" width="23.6" height="22.4" fill="#f4f6f9" stroke="#e8ebee" stroke-width="1"/>
<rect x="1116.8" y="162" width="15.6" height="2.2" fill="#c1c3c6"/>
<path d="M1159.4 151.2 H1156.6 V163.4 H1159.4 M1165.6 151.2 H1168.4 V163.4 H1165.6" fill="none" stroke="#b3b5b8" stroke-width="2.4"/>
<rect x="1195.3" y="146.3" width="17" height="5.4" fill="#b7b7b7"/>
<rect x="1195.3" y="153.6" width="17.4" height="12.8" fill="#d9d9d9"/>
<g fill="#cfcfcf"><rect x="1195.3" y="153.6" width="17.4" height="3.4"/><rect x="1195.3" y="158.2" width="17.4" height="3.4"/><rect x="1195.3" y="162.9" width="17.4" height="3.5"/></g>
<circle cx="1213.1" cy="160" r="6.9" fill="#bcbcbc"/><path d="M1209.5 160.2 L1212.2 162.9 L1217 157.4" fill="none" stroke="#fff" stroke-width="1.8"/>
<g fill="#8c8c8c"><circle cx="1237.6" cy="157.8" r="2.6"/><circle cx="1244.8" cy="157.8" r="2.6"/><circle cx="1252" cy="157.8" r="2.6"/></g>
<g fill="#a6c8ef"><rect x="1581.2" y="108.6" width="1.4" height="1.4"/><rect x="1581.2" y="113.6" width="1.4" height="1.4"/><rect x="1583.7" y="111.1" width="1.4" height="1.4"/><rect x="1586.2" y="108.6" width="1.4" height="1.4"/><rect x="1586.2" y="113.6" width="1.4" height="1.4"/><rect x="1588.7" y="111.1" width="1.4" height="1.4"/><rect x="1591.2" y="108.6" width="1.4" height="1.4"/><rect x="1591.2" y="113.6" width="1.4" height="1.4"/><rect x="1593.7" y="111.1" width="1.4" height="1.4"/><rect x="1596.2" y="108.6" width="1.4" height="1.4"/><rect x="1596.2" y="113.6" width="1.4" height="1.4"/><rect x="1598.7" y="111.1" width="1.4" height="1.4"/><rect x="1601.2" y="108.6" width="1.4" height="1.4"/><rect x="1601.2" y="113.6" width="1.4" height="1.4"/><rect x="1603.7" y="111.1" width="1.4" height="1.4"/><rect x="1606.2" y="108.6" width="1.4" height="1.4"/><rect x="1606.2" y="113.6" width="1.4" height="1.4"/><rect x="1608.7" y="111.1" width="1.4" height="1.4"/><rect x="1611.2" y="108.6" width="1.4" height="1.4"/><rect x="1611.2" y="113.6" width="1.4" height="1.4"/><rect x="1613.7" y="111.1" width="1.4" height="1.4"/><rect x="1616.2" y="108.6" width="1.4" height="1.4"/><rect x="1616.2" y="113.6" width="1.4" height="1.4"/><rect x="1618.7" y="111.1" width="1.4" height="1.4"/><rect x="1621.2" y="108.6" width="1.4" height="1.4"/><rect x="1621.2" y="113.6" width="1.4" height="1.4"/><rect x="1623.7" y="111.1" width="1.4" height="1.4"/><rect x="1626.2" y="108.6" width="1.4" height="1.4"/><rect x="1626.2" y="113.6" width="1.4" height="1.4"/><rect x="1628.7" y="111.1" width="1.4" height="1.4"/><rect x="1631.2" y="108.6" width="1.4" height="1.4"/><rect x="1631.2" y="113.6" width="1.4" height="1.4"/><rect x="1633.7" y="111.1" width="1.4" height="1.4"/><rect x="1636.2" y="108.6" width="1.4" height="1.4"/><rect x="1636.2" y="113.6" width="1.4" height="1.4"/><rect x="1638.7" y="111.1" width="1.4" height="1.4"/><rect x="1641.2" y="108.6" width="1.4" height="1.4"/><rect x="1641.2" y="113.6" width="1.4" height="1.4"/><rect x="1643.7" y="111.1" width="1.4" height="1.4"/><rect x="1646.2" y="108.6" width="1.4" height="1.4"/><rect x="1646.2" y="113.6" width="1.4" height="1.4"/><rect x="1648.7" y="111.1" width="1.4" height="1.4"/><rect x="1651.2" y="108.6" width="1.4" height="1.4"/><rect x="1651.2" y="113.6" width="1.4" height="1.4"/><rect x="1653.7" y="111.1" width="1.4" height="1.4"/><rect x="1656.2" y="108.6" width="1.4" height="1.4"/><rect x="1656.2" y="113.6" width="1.4" height="1.4"/><rect x="1658.7" y="111.1" width="1.4" height="1.4"/><rect x="1661.2" y="108.6" width="1.4" height="1.4"/><rect x="1661.2" y="113.6" width="1.4" height="1.4"/><rect x="1663.7" y="111.1" width="1.4" height="1.4"/><rect x="1666.2" y="108.6" width="1.4" height="1.4"/><rect x="1666.2" y="113.6" width="1.4" height="1.4"/><rect x="1668.7" y="111.1" width="1.4" height="1.4"/><rect x="1671.2" y="108.6" width="1.4" height="1.4"/><rect x="1671.2" y="113.6" width="1.4" height="1.4"/><rect x="1673.7" y="111.1" width="1.4" height="1.4"/><rect x="1676.2" y="108.6" width="1.4" height="1.4"/><rect x="1676.2" y="113.6" width="1.4" height="1.4"/><rect x="1678.7" y="111.1" width="1.4" height="1.4"/><rect x="1681.2" y="108.6" width="1.4" height="1.4"/><rect x="1681.2" y="113.6" width="1.4" height="1.4"/><rect x="1683.7" y="111.1" width="1.4" height="1.4"/><rect x="1686.2" y="108.6" width="1.4" height="1.4"/><rect x="1686.2" y="113.6" width="1.4" height="1.4"/><rect x="1688.7" y="111.1" width="1.4" height="1.4"/><rect x="1691.2" y="108.6" width="1.4" height="1.4"/><rect x="1691.2" y="113.6" width="1.4" height="1.4"/><rect x="1693.7" y="111.1" width="1.4" height="1.4"/><rect x="1696.2" y="108.6" width="1.4" height="1.4"/><rect x="1696.2" y="113.6" width="1.4" height="1.4"/><rect x="1698.7" y="111.1" width="1.4" height="1.4"/><rect x="1701.2" y="108.6" width="1.4" height="1.4"/><rect x="1701.2" y="113.6" width="1.4" height="1.4"/><rect x="1703.7" y="111.1" width="1.4" height="1.4"/><rect x="1706.2" y="108.6" width="1.4" height="1.4"/><rect x="1706.2" y="113.6" width="1.4" height="1.4"/><rect x="1708.7" y="111.1" width="1.4" height="1.4"/><rect x="1711.2" y="108.6" width="1.4" height="1.4"/><rect x="1711.2" y="113.6" width="1.4" height="1.4"/><rect x="1713.7" y="111.1" width="1.4" height="1.4"/><rect x="1716.2" y="108.6" width="1.4" height="1.4"/><rect x="1716.2" y="113.6" width="1.4" height="1.4"/><rect x="1718.7" y="111.1" width="1.4" height="1.4"/><rect x="1721.2" y="108.6" width="1.4" height="1.4"/><rect x="1721.2" y="113.6" width="1.4" height="1.4"/><rect x="1723.7" y="111.1" width="1.4" height="1.4"/><rect x="1726.2" y="108.6" width="1.4" height="1.4"/><rect x="1726.2" y="113.6" width="1.4" height="1.4"/><rect x="1728.7" y="111.1" width="1.4" height="1.4"/><rect x="1731.2" y="108.6" width="1.4" height="1.4"/><rect x="1731.2" y="113.6" width="1.4" height="1.4"/><rect x="1733.7" y="111.1" width="1.4" height="1.4"/><rect x="1736.2" y="108.6" width="1.4" height="1.4"/><rect x="1736.2" y="113.6" width="1.4" height="1.4"/><rect x="1738.7" y="111.1" width="1.4" height="1.4"/><rect x="1741.2" y="108.6" width="1.4" height="1.4"/><rect x="1741.2" y="113.6" width="1.4" height="1.4"/><rect x="1743.7" y="111.1" width="1.4" height="1.4"/><rect x="1746.2" y="108.6" width="1.4" height="1.4"/><rect x="1746.2" y="113.6" width="1.4" height="1.4"/><rect x="1748.7" y="111.1" width="1.4" height="1.4"/><rect x="1751.2" y="108.6" width="1.4" height="1.4"/><rect x="1751.2" y="113.6" width="1.4" height="1.4"/><rect x="1753.7" y="111.1" width="1.4" height="1.4"/><rect x="1756.2" y="108.6" width="1.4" height="1.4"/><rect x="1756.2" y="113.6" width="1.4" height="1.4"/><rect x="1758.7" y="111.1" width="1.4" height="1.4"/><rect x="1761.2" y="108.6" width="1.4" height="1.4"/><rect x="1761.2" y="113.6" width="1.4" height="1.4"/><rect x="1763.7" y="111.1" width="1.4" height="1.4"/><rect x="1766.2" y="108.6" width="1.4" height="1.4"/><rect x="1766.2" y="113.6" width="1.4" height="1.4"/><rect x="1768.7" y="111.1" width="1.4" height="1.4"/><rect x="1771.2" y="108.6" width="1.4" height="1.4"/><rect x="1771.2" y="113.6" width="1.4" height="1.4"/><rect x="1773.7" y="111.1" width="1.4" height="1.4"/><rect x="1776.2" y="108.6" width="1.4" height="1.4"/><rect x="1776.2" y="113.6" width="1.4" height="1.4"/><rect x="1778.7" y="111.1" width="1.4" height="1.4"/><rect x="1781.2" y="108.6" width="1.4" height="1.4"/><rect x="1781.2" y="113.6" width="1.4" height="1.4"/><rect x="1783.7" y="111.1" width="1.4" height="1.4"/><rect x="1786.2" y="108.6" width="1.4" height="1.4"/><rect x="1786.2" y="113.6" width="1.4" height="1.4"/><rect x="1788.7" y="111.1" width="1.4" height="1.4"/><rect x="1791.2" y="108.6" width="1.4" height="1.4"/><rect x="1791.2" y="113.6" width="1.4" height="1.4"/><rect x="1793.7" y="111.1" width="1.4" height="1.4"/><rect x="1796.2" y="108.6" width="1.4" height="1.4"/><rect x="1796.2" y="113.6" width="1.4" height="1.4"/><rect x="1798.7" y="111.1" width="1.4" height="1.4"/><rect x="1801.2" y="108.6" width="1.4" height="1.4"/><rect x="1801.2" y="113.6" width="1.4" height="1.4"/><rect x="1803.7" y="111.1" width="1.4" height="1.4"/><rect x="1806.2" y="108.6" width="1.4" height="1.4"/><rect x="1806.2" y="113.6" width="1.4" height="1.4"/><rect x="1808.7" y="111.1" width="1.4" height="1.4"/><rect x="1811.2" y="108.6" width="1.4" height="1.4"/><rect x="1811.2" y="113.6" width="1.4" height="1.4"/><rect x="1813.7" y="111.1" width="1.4" height="1.4"/><rect x="1816.2" y="108.6" width="1.4" height="1.4"/><rect x="1816.2" y="113.6" width="1.4" height="1.4"/><rect x="1818.7" y="111.1" width="1.4" height="1.4"/><rect x="1821.2" y="108.6" width="1.4" height="1.4"/><rect x="1821.2" y="113.6" width="1.4" height="1.4"/><rect x="1823.7" y="111.1" width="1.4" height="1.4"/><rect x="1826.2" y="108.6" width="1.4" height="1.4"/><rect x="1826.2" y="113.6" width="1.4" height="1.4"/><rect x="1828.7" y="111.1" width="1.4" height="1.4"/><rect x="1831.2" y="108.6" width="1.4" height="1.4"/><rect x="1831.2" y="113.6" width="1.4" height="1.4"/><rect x="1833.7" y="111.1" width="1.4" height="1.4"/><rect x="1836.2" y="108.6" width="1.4" height="1.4"/><rect x="1836.2" y="113.6" width="1.4" height="1.4"/><rect x="1838.7" y="111.1" width="1.4" height="1.4"/><rect x="1841.2" y="108.6" width="1.4" height="1.4"/><rect x="1841.2" y="113.6" width="1.4" height="1.4"/><rect x="1843.7" y="111.1" width="1.4" height="1.4"/><rect x="1846.2" y="108.6" width="1.4" height="1.4"/><rect x="1846.2" y="113.6" width="1.4" height="1.4"/><rect x="1848.7" y="111.1" width="1.4" height="1.4"/><rect x="1851.2" y="108.6" width="1.4" height="1.4"/><rect x="1851.2" y="113.6" width="1.4" height="1.4"/><rect x="1853.7" y="111.1" width="1.4" height="1.4"/></g>
<path d="M1861.00 108.80 L1870.40 108.80 L1865.70 113.80 Z" fill="#e6f0fb"/>
<g transform="translate(1878.80 105.30)" fill="#e6f0fb"><rect x="1.2" y="0" width="6.6" height="1.2"/><rect x="1.2" y="0" width="1.1" height="6"/><rect x="5.5" y="0" width="2.3" height="6"/><rect x="0" y="5.8" width="8.8" height="1.3"/><rect x="3.8" y="7" width="1.2" height="4"/></g>
<path d="M1897.20 107.20 L1905.20 115.20 M1905.20 107.20 L1897.20 115.20" stroke="#eaf2fc" stroke-width="2.9" fill="none"/>
<g transform="translate(1823.00 187.40) scale(0.820)">
<path d="M0.8 18 L0.8 3.2 Q0.8 2.2 1.8 2.2 L10 2.2 L12 0.6 Q12.4 0.2 13 0.2 L17.6 0.2 Q18.6 0.2 18.6 1.2 L18.6 6 L4.8 6 Z" fill="#fbeed2" stroke="#ecc47a" stroke-width="0.9"/>
<path d="M0.6 18.2 L4.2 6.6 Q4.5 5.8 5.3 5.8 L21.8 5.8 Q22.7 5.8 22.4 6.7 L19 17.4 Q18.7 18.2 17.9 18.2 Z" fill="#e8b961"/>
</g>
<path d="M1851.20 192.60 L1859.20 192.60 L1855.20 196.40 Z" fill="#222"/>
<path d="M1858.20 273.20 L1868.20 273.20 L1863.20 282.20 Z" fill="#111"/>
<circle cx="1847.7" cy="358.2" r="7.8" fill="#d2d2d2"/><rect x="1846.9" y="356.6" width="2" height="6" fill="#fff" transform="skewX(-10)" transform-origin="1847.7 358"/><circle cx="1848.6" cy="354" r="1.2" fill="#fff"/>
<path d="M1858.4 538.6 L1866.8 542.9 L1858.4 547.2 Z" fill="#111"/></svg>
</body></html>
